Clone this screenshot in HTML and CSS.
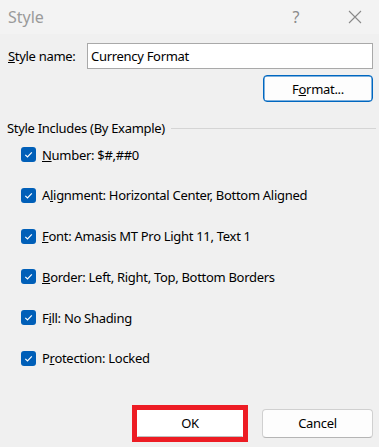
FILE: index.html
```html
<!DOCTYPE html>
<html>
<head>
<meta charset="utf-8">
<link rel="stylesheet" href="styles.css">
</head>
<body>
<div class="dialog">
  <div class="titlebar">
    <span class="title">Style</span>
    <span class="help">?</span>
    <span class="close">
      <svg width="14" height="14" viewBox="0 0 14 14"><path d="M1 1 L13 13 M13 1 L1 13" stroke="#8a8a8a" stroke-width="1.1" fill="none"/></svg>
    </span>
  </div>
  <div class="content">
    <div class="name-row">
      <span class="label"><u>S</u>tyle name:</span>
      <div class="input">Currency Format</div>
    </div>
    <div class="format-row">
      <button class="btn btn-format">F<u>o</u>rmat...</button>
    </div>
    <div class="group-head">
      <span class="group-title">Style Includes (By Example)</span>
      <span class="group-line"></span>
    </div>
    <ul class="checks">
      <li class="check"><span class="box"><svg width="15" height="15" viewBox="0 0 15 15"><path d="M4.3 7.8 L6.5 10 L10.8 5.3" stroke="#fff" stroke-width="1.2" fill="none"/></svg></span><span class="check-text"><u>N</u>umber: $#,##0</span></li>
      <li class="check"><span class="box"><svg width="15" height="15" viewBox="0 0 15 15"><path d="M4.3 7.8 L6.5 10 L10.8 5.3" stroke="#fff" stroke-width="1.2" fill="none"/></svg></span><span class="check-text">A<u>l</u>ignment: Horizontal Center, Bottom Aligned</span></li>
      <li class="check"><span class="box"><svg width="15" height="15" viewBox="0 0 15 15"><path d="M4.3 7.8 L6.5 10 L10.8 5.3" stroke="#fff" stroke-width="1.2" fill="none"/></svg></span><span class="check-text"><u>F</u>ont: Amasis MT Pro Light 11, Text 1</span></li>
      <li class="check"><span class="box"><svg width="15" height="15" viewBox="0 0 15 15"><path d="M4.3 7.8 L6.5 10 L10.8 5.3" stroke="#fff" stroke-width="1.2" fill="none"/></svg></span><span class="check-text"><u>B</u>order: Left, Right, Top, Bottom Borders</span></li>
      <li class="check"><span class="box"><svg width="15" height="15" viewBox="0 0 15 15"><path d="M4.3 7.8 L6.5 10 L10.8 5.3" stroke="#fff" stroke-width="1.2" fill="none"/></svg></span><span class="check-text">F<u>i</u>ll: No Shading</span></li>
      <li class="check"><span class="box"><svg width="15" height="15" viewBox="0 0 15 15"><path d="M4.3 7.8 L6.5 10 L10.8 5.3" stroke="#fff" stroke-width="1.2" fill="none"/></svg></span><span class="check-text">P<u>r</u>otection: Locked</span></li>
    </ul>
    <div class="actions">
      <div class="ok-highlight"><button class="btn btn-ok">OK</button></div>
      <button class="btn btn-cancel">Cancel</button>
    </div>
  </div>
</div>
</body>
</html>
```
FILE: styles.css
```css
* { box-sizing: border-box; }
html, body { margin: 0; padding: 0; }
body {
  background: #f0f0f0;
  font-family: "Noto Sans", "Open Sans", sans-serif;
  font-size: 13px;
  letter-spacing: -0.3px;
  color: #000;
  width: 379px;
  height: 447px;
  overflow: hidden;
}
.dialog { width: 379px; height: 447px; display: flex; flex-direction: column; }
.titlebar {
  height: 34px;
  background: #f3f3f3;
  display: flex;
  align-items: center;
  padding-left: 8px;
  letter-spacing: 0;
}
.title { font-size: 16px; color: #9a9a9a; flex: 1; }
.help { font-size: 16px; color: #8a8a8a; width: 14px; text-align: center; margin-right: 45px; }
.close { width: 14px; height: 14px; margin-right: 17px; display: flex; }
.content { display: flex; flex-direction: column; padding: 0 6px 0 8px; }
.name-row { display: flex; align-items: center; margin-top: 9px; height: 26px; }
.label { width: 79px; }
.input {
  flex: 1;
  height: 26px;
  background: #fff;
  border: 1px solid #a9a9a9;
  display: flex;
  align-items: center;
  padding-left: 3px;
}
.format-row { display: flex; justify-content: flex-end; margin-top: 6px; }
.btn {
  font-family: inherit;
  font-size: 13px;
  letter-spacing: -0.3px;
  color: #000;
  background: #fdfdfd;
  border: 1px solid #d0d0d0;
  border-bottom-color: #b5b5b5;
  border-radius: 4px;
  padding: 0;
  margin: 0;
}
.btn-format {
  width: 110px;
  height: 27px;
  border: 1px solid #0067c0;
  box-shadow: inset 0 0 0 0.5px #0067c0;
}
.group-head { display: flex; align-items: center; margin-top: 17px; height: 18px; margin-left: -1px; }
.group-title { white-space: nowrap; }
.group-line { flex: 1; height: 1px; background: #d5d5d5; margin-left: 6px; margin-right: -3px; }
.checks { list-style: none; margin: 10px 0 0 13px; padding: 0; display: flex; flex-direction: column; gap: 25.8px; }
.check { display: flex; align-items: center; height: 15px; }
.box { width: 15px; height: 15px; background: #005fb8; border-radius: 3px; display: flex; margin-right: 6px; flex: none; }
.check-text { white-space: nowrap; }
.actions { display: flex; justify-content: flex-end; align-items: center; margin-top: 39px; gap: 14px; }
.ok-highlight { border: 5px solid #ed1c24; width: 116px; height: 37px; display: flex; }
.btn-ok { width: 106px; height: 27px; border-radius: 0; border-color: #fff; border-bottom-color: #c0c0c0; background: #fff; }
.btn-cancel { width: 111px; height: 29px; }
```
